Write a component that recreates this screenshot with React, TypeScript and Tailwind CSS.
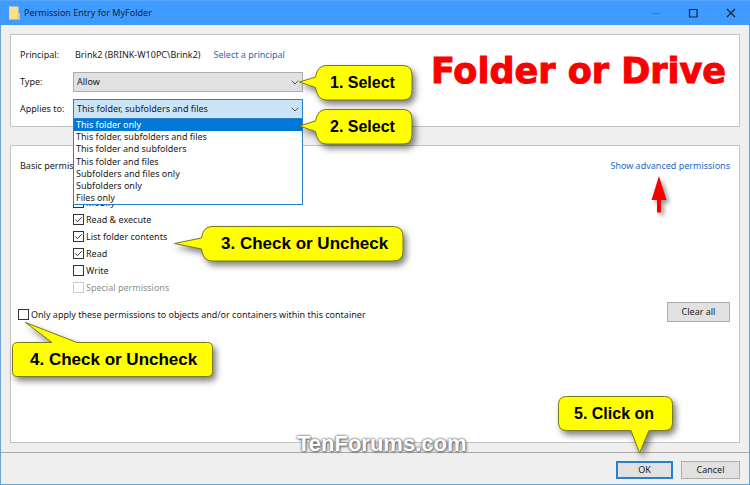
import { useState } from 'react';
import type { ReactNode } from 'react';

const targets = [
  'This folder only',
  'This folder, subfolders and files',
  'This folder and subfolders',
  'This folder and files',
  'Subfolders and files only',
  'Subfolders only',
  'Files only',
];

const permissions = [
  { name: 'Modify', checked: false },
  { name: 'Read & execute', checked: true },
  { name: 'List folder contents', checked: true },
  { name: 'Read', checked: true },
  { name: 'Write', checked: false },
  { name: 'Special permissions', checked: false, disabled: true },
];

interface CheckProps {
  label: string;
  checked?: boolean;
  disabled?: boolean;
}

function Check({ label, checked, disabled }: CheckProps) {
  return (
    <label className="flex h-[17px] items-center gap-[2px] whitespace-nowrap has-disabled:text-[#909090]">
      <span className="grid size-[11px] shrink-0">
        <input
          type="checkbox"
          defaultChecked={checked}
          disabled={disabled}
          className="peer col-start-1 row-start-1 size-[11px] appearance-none border border-[#333] bg-white disabled:border-[#ccc]"
        />
        <svg viewBox="0 0 11 11" className="pointer-events-none invisible col-start-1 row-start-1 size-[11px] peer-checked:visible">
          <path d="M2.3 5.5 4.4 7.7 8.8 3.2" fill="none" stroke="#333" strokeWidth="1" />
        </svg>
      </span>
      {label}
    </label>
  );
}

interface CalloutProps {
  className: string;
  width: number;
  height: number;
  path: string;
  children: ReactNode;
}

// Yellow speech bubble, the path holds both the body and its pointer
function Callout({ className, width, height, path, children }: CalloutProps) {
  return (
    <div className={`pointer-events-none absolute z-20 flex font-['Liberation_Sans',Arial,sans-serif] font-bold text-black ${className}`}>
      <svg
        width={width}
        height={height}
        viewBox={`0 0 ${width} ${height}`}
        className="absolute top-0 left-0 overflow-visible drop-shadow-[3px_4px_3px_rgba(0,0,0,0.5)]"
      >
        <path d={path} fill="#ffff00" stroke="#77771c" strokeWidth="1" strokeLinejoin="round" />
      </svg>
      <span className="relative whitespace-nowrap">{children}</span>
    </div>
  );
}

const selectPath =
  'M27 .5H104Q113 .5 113 10.500V25Q113 35 104 35H27Q18.500 35 16.500 22.500L.5 17 16.500 12Q18.500 .5 27 .5Z';

function Chevron() {
  return (
    <svg viewBox="0 0 8 5" className="pointer-events-none mr-1 h-[5px] w-2 self-center justify-self-end [grid-area:1/1]">
      <path d="M.7.7 4 4 7.300.7" fill="none" stroke="#555" strokeWidth="1" />
    </svg>
  );
}

export default function App() {
  const [applied, setApplied] = useState(targets[1]);

  return (
    <div className="flex min-h-screen flex-col overflow-hidden bg-[#efefef] font-['Noto_Sans','Open_Sans',sans-serif] text-[9px] leading-[14px] text-[#1a1a1a]">
      {/* Title bar */}
      <header className="flex h-[25px] items-center border-t border-[#55a5fa] bg-[#3f9bfe] pl-[9px] text-[#10243c]">
        <svg viewBox="0 0 11 14" className="mr-1 h-[14px] w-[11px]">
          <path d="M0 .5H9.500V7L11 8V13.500H0Z" fill="#fbe08a" />
          <path d="M8.500 8.500 11 7.500V13.500H8.500Z" fill="#e9c664" />
          <path d="M0 .5H1V13.500H0Z" fill="#f4d473" />
        </svg>
        <h1 className="flex-1">Permission Entry for MyFolder</h1>
        <button aria-label="Minimize" disabled className="flex h-full w-[37px] items-center justify-center">
          <svg viewBox="0 0 10 10" className="size-[10px]">
            <path d="M1 5.500H9" stroke="#2d82dd" />
          </svg>
        </button>
        <button aria-label="Maximize" className="flex h-full w-[37px] items-center justify-center">
          <svg viewBox="0 0 10 10" className="size-[10px]">
            <path d="M1.500 1.500H9V9H1.500Z" fill="none" stroke="#10243c" strokeWidth="1.200" />
          </svg>
        </button>
        <button aria-label="Close" className="flex h-full w-[39px] items-center justify-center">
          <svg viewBox="0 0 10 10" className="size-[10px]">
            <path d="M1 1 9 9M9 1 1 9" stroke="#10243c" strokeWidth="1.200" />
          </svg>
        </button>
      </header>

      <div className="flex flex-1 flex-col border-x border-b border-[#68a4d4]">
        <main className="relative flex flex-1 flex-col gap-[18px] px-[9px] pt-[9px] pb-[9px]">
          {/* Principal and scope */}
          <section className="flex justify-between border border-[#c3c3c3] bg-white pt-[10px] pr-[13px] pb-[7px] pl-[9px]">
            <div className="grid shrink-0 grid-cols-[53px_230px] gap-y-[7px]">
              <span className="self-center">Principal:</span>
              <div className="flex h-5 items-center gap-[13px] pl-[2px] whitespace-nowrap">
                <span>Brink2 (BRINK-W10PC\Brink2)</span>
                <a href="#principal" className="text-[#1a6bbf]">Select a principal</a>
              </div>

              <label htmlFor="type" className="self-center">Type:</label>
              <div className="relative grid">
                <select id="type" className="h-5 appearance-none border border-[#adadad] bg-[#e1e1e1] pl-[3px] [grid-area:1/1]">
                  <option>Allow</option>
                  <option>Deny</option>
                </select>
                <Chevron />
                <Callout
                  className="-top-[7px] left-[226px] pt-[9px] pl-[31px] text-[16px] leading-[18px]"
                  width={115}
                  height={36}
                  path={selectPath}
                >
                  1. Select
                </Callout>
              </div>

              <label htmlFor="applies" className="self-center">Applies to:</label>
              <div className="relative grid">
                <select
                  id="applies"
                  value={applied}
                  onChange={(e) => setApplied(e.target.value)}
                  className="h-5 appearance-none border border-[#2a7fc9] bg-[#cce4f7] pl-[3px] [grid-area:1/1]"
                >
                  {targets.map((t) => (
                    <option key={t}>{t}</option>
                  ))}
                </select>
                <Chevron />
                <ul
                  role="listbox"
                  aria-label="Applies to"
                  className="absolute top-[19px] left-0 z-10 flex h-[87px] w-full flex-col border border-[#2a7fc9] bg-white"
                >
                  {targets.map((t) => (
                    <li
                      key={t}
                      role="option"
                      aria-selected={t === applied}
                      onClick={() => setApplied(t)}
                      className="flex min-h-0 flex-1 items-center pl-[2px] first:bg-[#0078d7] first:text-white"
                    >
                      {t}
                    </li>
                  ))}
                </ul>
                <Callout
                  className="top-[10px] left-[226px] pt-[9px] pl-[31px] text-[16px] leading-[18px]"
                  width={115}
                  height={36}
                  path={selectPath}
                >
                  2. Select
                </Callout>
              </div>
            </div>
            <h2 className="pt-[6px] font-['DejaVu_Sans',sans-serif] text-[35px] leading-10 font-bold whitespace-nowrap text-[#fa0000] [-webkit-text-stroke:1px_#fa0000]">
              Folder or Drive
            </h2>
          </section>

          {/* Permissions */}
          <section className="flex-1 border border-[#c3c3c3] bg-white px-[9px] pt-[11px]">
            <div className="flex h-[18px] items-center justify-between">
              <h3>Basic permissions:</h3>
              <div className="relative">
                <a href="#advanced" className="text-[#1a6bbf]">Show advanced permissions</a>
                <svg
                  viewBox="0 0 16 37"
                  className="absolute top-[17px] right-[63px] h-[37px] w-4 overflow-visible drop-shadow-[3px_3px_2px_rgba(0,0,0,0.4)]"
                >
                  <path d="M8 0 15.500 24H10V36.500H6V24H.5Z" fill="#f80000" />
                </svg>
              </div>
            </div>
            <div className="relative mt-[19px] ml-[53px] w-fit">
              {permissions.map((p) => (
                <Check key={p.name} label={p.name} checked={p.checked} disabled={p.disabled} />
              ))}
              <Callout
                className="top-8 left-[101px] pt-[9px] pl-[47px] text-[17px] leading-[18px]"
                width={230}
                height={36}
                path="M38 .5H219Q229 .5 229 10.500V25Q229 35 219 35H38Q29 35 27.500 23L.5 17.500 27.500 12Q29 .5 38 .5Z"
              >
                3. Check or Uncheck
              </Callout>
            </div>
            <div className="mt-[6px] flex justify-between">
              <div className="relative -ml-[2px] pt-1">
                <Check label="Only apply these permissions to objects and/or containers within this container" />
                <Callout
                  className="top-5 -left-[6px] pt-[29px] pl-[18px] text-[17px] leading-[18px]"
                  width={202}
                  height={56}
                  path="M5.500 20.500H40L13.500.5 65 20.500H195.500Q200.500 20.500 200.500 25.500V49.500Q200.500 54.500 195.500 54.500H5.500Q.5 54.500 .5 49.500V25.500Q.5 20.500 5.500 20.500Z"
                >
                  4. Check or Uncheck
                </Callout>
              </div>
              <button className="h-5 w-[63px] border border-[#adadad] bg-[#e1e1e1]">Clear all</button>
            </div>
          </section>

          <p className="absolute -bottom-[6px] left-[296px] font-['Liberation_Sans',Arial,sans-serif] text-[22px] leading-7 font-bold text-white [text-shadow:0_0_3px_#666,1px_1px_2px_#777,0_0_2px_#888]">
            TenForums.com
          </p>
        </main>

        <footer className="flex justify-end gap-2 border-t border-[#aaa] px-[9px] pt-2 pb-[5px]">
          <div className="relative">
            <button className="h-[18px] w-[57px] border-2 border-[#2a7fc9] bg-[#e1e1e1]">OK</button>
            <Callout
              className="-top-[65px] right-0 w-[115px] pt-[9px] pl-4 text-[16px] leading-[18px]"
              width={116}
              height={58}
              path="M8.500 .5H106.500Q114.500 .5 114.500 8.500V26.500Q114.500 34.500 106.500 34.500H91L81.500 57 73 34.500H8.500Q.5 34.500 .5 26.500V8.500Q.5 .5 8.500 .5Z"
            >
              5. Click on
            </Callout>
          </div>
          <button className="h-[18px] w-[59px] border border-[#adadad] bg-[#e1e1e1]">Cancel</button>
        </footer>
      </div>
    </div>
  );
}
